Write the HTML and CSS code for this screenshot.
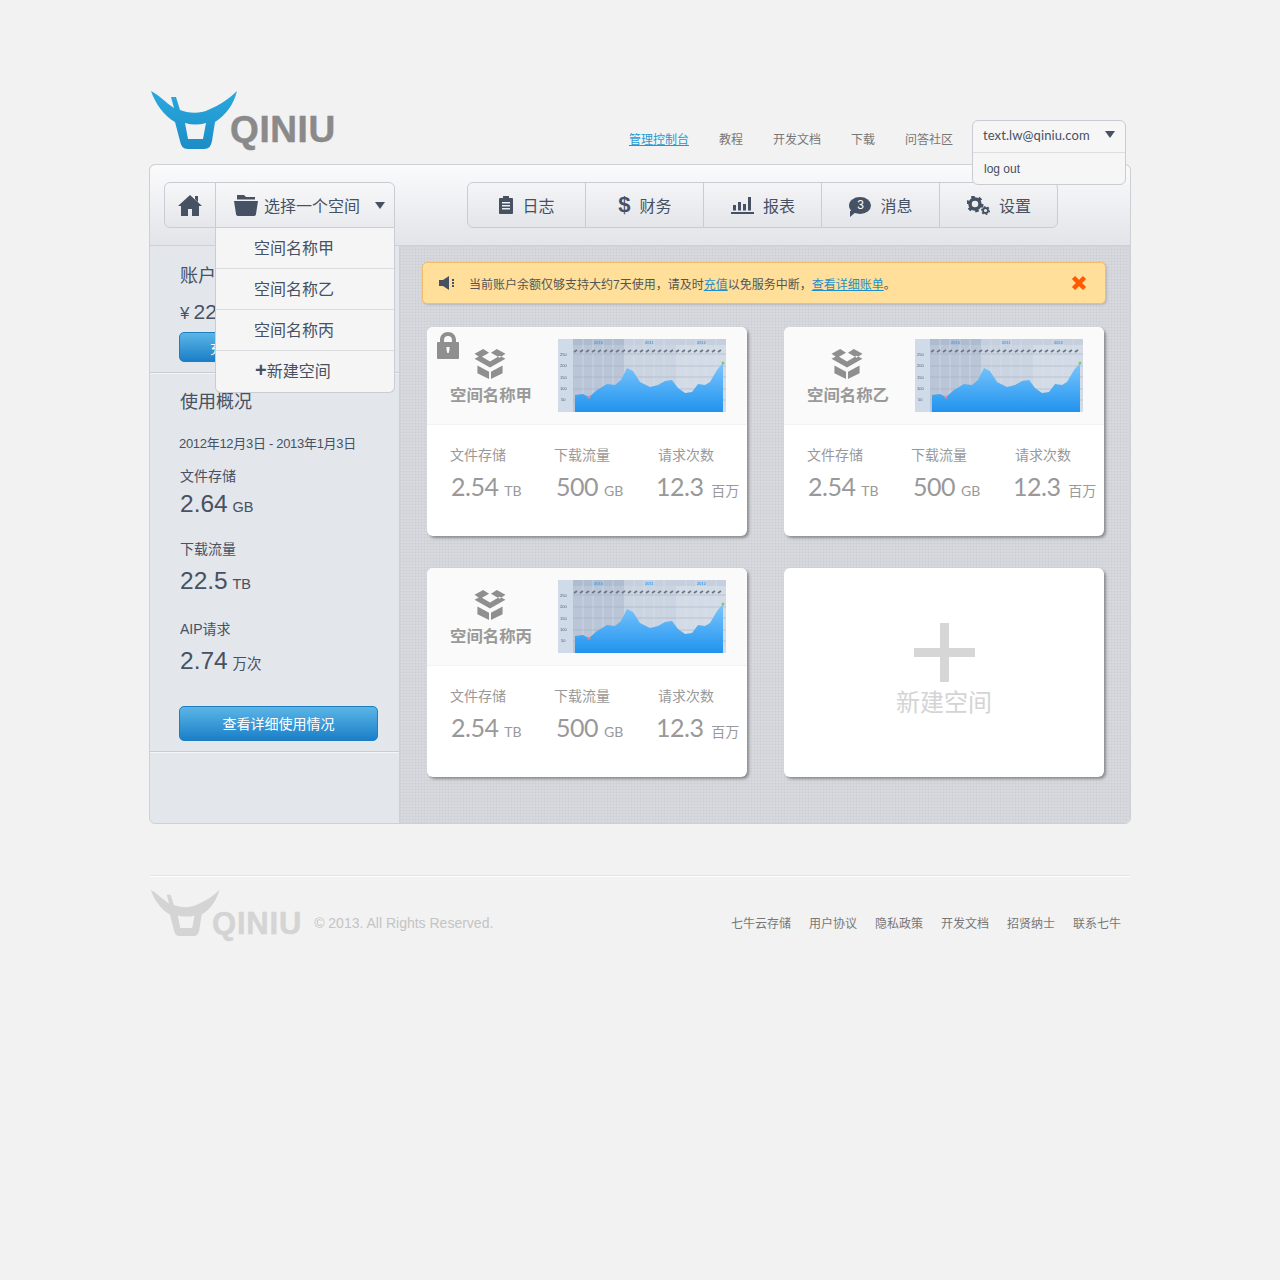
FILE: index.html
```html
<!DOCTYPE html>
<html lang="zh-CN">
<head>
    <meta charset="UTF-8">
    <meta name="viewport" content="width=device-width, initial-scale=1.0">
    <title>七牛云存储</title>
    <link rel="stylesheet" href="styles.css">
</head>
<body>
    <!-- shared drawings -->
    <svg class="defs" width="0" height="0">
        <defs>
            <linearGradient id="blueBull" x1="0" y1="0" x2="0" y2="1">
                <stop offset="0" stop-color="#2aa9df"/>
                <stop offset="1" stop-color="#1c8cc6"/>
            </linearGradient>
            <linearGradient id="chartFill" x1="0" y1="0" x2="0" y2="1">
                <stop offset="0" stop-color="#7cc6fd"/>
                <stop offset="1" stop-color="#2093ee"/>
            </linearGradient>
            <symbol id="bull" viewBox="0 0 88 60">
                <path fill-rule="evenodd" d="M1 1C9 5 15 12 24 18L21 7L26 7L30 20C37 23 50 24 58 20C70 15 80 8 87 1C84 14 76 25 65 32L62 51C61 56 59 59 54 59L38 59C33 59 31 56 30 51L25 32C14 26 5 13 1 1ZM35 33L38 49L53 49L56 33C49 35 42 35 35 33Z"/>
            </symbol>
            <symbol id="box" viewBox="0 0 32 31">
                <path d="M0 5L9 0L15 4L6 9ZM32 5L23 0L17 4L26 9ZM0 10L6 7L16 13L26 7L32 10L16 19ZM3 17L15 23.500L15 31L3 25ZM29 17L17 23.500L17 31L29 25Z"/>
            </symbol>
            <symbol id="chart" viewBox="0 0 168 73">
                <rect width="168" height="73" fill="#cfdbe9"/>
                <rect x="15" width="51" height="73" fill="#bac6d8"/>
                <rect x="66" width="52" height="73" fill="#cbd4e1"/>
                <rect x="118" width="50" height="73" fill="#d3dbe6"/>
                <rect x="15" width="51" height="6" fill="#aebcd0"/>
                <rect x="66" width="102" height="6" fill="#c5cfde"/>
                <path class="chart-stripes" d="M25 0V73M35 0V73M45 0V73M55 0V73M76 0V73M86 0V73M96 0V73M106 0V73M128 0V73M138 0V73M148 0V73M158 0V73"/>
                <path class="chart-grid" d="M15 15H168M15 27H168M15 38H168M15 50H168M15 61H168"/>
                <path class="chart-ticks" d="M16 13l3-2M22 13l3-2M28 13l3-2M34 13l3-2M40 13l3-2M46 13l3-2M52 13l3-2M58 13l3-2M64 13l3-2M70 13l3-2M76 13l3-2M82 13l3-2M88 13l3-2M94 13l3-2M100 13l3-2M106 13l3-2M112 13l3-2M118 13l3-2M124 13l3-2M130 13l3-2M136 13l3-2M142 13l3-2M148 13l3-2M154 13l3-2M160 13l3-2"/>
                <text class="chart-year" x="36" y="5">2010</text>
                <text class="chart-year" x="87" y="5">2011</text>
                <text class="chart-year" x="139" y="5">2012</text>
                <text class="chart-axis" x="2" y="17">250</text>
                <text class="chart-axis" x="2" y="28">200</text>
                <text class="chart-axis" x="2" y="40">150</text>
                <text class="chart-axis" x="2" y="51">100</text>
                <text class="chart-axis" x="3" y="62">50</text>
                <path fill="url(#chartFill)" d="M17 56L25 55L31 58L39 51L49 45L57 46L63 41L69 29L75 32L82 43L92 48L100 46L107 42L114 41L120 49L127 54L134 53L140 45L147 46L152 43L159 31L165 24V73H17Z"/>
                <circle cx="31" cy="58" r="1.500" fill="#e88a8a"/>
                <circle cx="165" cy="24" r="1.500" fill="#7cc96e"/>
            </symbol>
        </defs>
    </svg>

    <div class="page">
        <header class="top">
            <a class="logo">
                <svg class="logo-mark" width="88" height="60"><use href="#bull"/></svg>
                <span class="logo-text">QINIU</span>
            </a>
            <nav class="top-nav">
                <a class="active">管理控制台</a>
                <a>教程</a>
                <a>开发文档</a>
                <a>下载</a>
                <a>问答社区</a>
            </nav>
            <div class="user-menu">
                <div class="user-name">text.lw@qiniu.com <i class="caret"></i></div>
                <div class="user-logout">log out</div>
            </div>
        </header>

        <div class="panel">
            <div class="toolbar">
                <div class="home-btn">
                    <svg width="24" height="21" viewBox="0 0 24 21"><path fill="#465163" d="M12 0L24 11H21V21H14V14H10V21H3V11H0ZM17 1H20V7L17 4Z"/></svg>
                </div>
                <div class="space-select">
                    <div class="space-current">
                        <svg width="24" height="21" viewBox="0 0 24 21"><path fill="#465163" d="M3 3V0H10L12 2H21V4.500H3ZM0 6H24L22 19C22 20 21 21 20 21H4C3 21 2 20 2 19Z"/></svg>
                        <span>选择一个空间</span>
                        <i class="caret caret-big"></i>
                    </div>
                    <ul class="space-menu">
                        <li>空间名称甲</li>
                        <li>空间名称乙</li>
                        <li>空间名称丙</li>
                        <li><b>+</b>新建空间</li>
                    </ul>
                </div>
                <div class="tabs">
                    <a class="tab">
                        <svg width="14" height="18" viewBox="0 0 14 18"><path fill="#465163" d="M1 2H4V0H10V2H13C13.500 2 14 2.500 14 3V17C14 17.500 13.500 18 13 18H1C.5 18 0 17.500 0 17V3C0 2.500 .5 2 1 2ZM3 6V7.500H11V6ZM3 9V10.500H11V9ZM3 12V13.500H11V12Z"/></svg>
                        <span>日志</span>
                    </a>
                    <a class="tab">
                        <span class="dollar">$</span>
                        <span>财务</span>
                    </a>
                    <a class="tab">
                        <svg width="23" height="17" viewBox="0 0 23 17"><path fill="#465163" d="M0 15H23V17H0ZM2 8H5V13.500H2ZM7 5H10V13.500H7ZM12 7H15V13.500H12ZM17 0H20V13.500H17Z"/></svg>
                        <span>报表</span>
                    </a>
                    <a class="tab">
                        <span class="bubble">3</span>
                        <span>消息</span>
                    </a>
                    <a class="tab">
                        <svg width="23" height="19" viewBox="0 0 23 19">
                            <circle class="gear-ring" cx="8" cy="8" r="5"/>
                            <circle class="gear-teeth" cx="8" cy="8" r="7" pathLength="32"/>
                            <circle class="gear-ring-small" cx="18.500" cy="14.500" r="2.500"/>
                            <circle class="gear-teeth-small" cx="18.500" cy="14.500" r="3.800" pathLength="32"/>
                        </svg>
                        <span>设置</span>
                    </a>
                </div>
            </div>

            <div class="panel-body">
                <aside class="sidebar">
                    <section class="account">
                        <h3>账户余额</h3>
                        <div class="balance"><span class="yen">¥</span>22.50</div>
                        <a class="btn btn-short">充值</a>
                    </section>
                    <section class="usage">
                        <h3>使用概况</h3>
                        <div class="usage-date">2012年12月3日 - 2013年1月3日</div>
                        <div class="stat stat-first">
                            <div class="stat-label">文件存储</div>
                            <div class="stat-value">2.64 <small>GB</small></div>
                        </div>
                        <div class="stat">
                            <div class="stat-label">下载流量</div>
                            <div class="stat-value">22.5 <small>TB</small></div>
                        </div>
                        <div class="stat stat-last">
                            <div class="stat-label">AIP请求</div>
                            <div class="stat-value">2.74 <small>万次</small></div>
                        </div>
                        <a class="btn btn-wide">查看详细使用情况</a>
                    </section>
                </aside>

                <main class="content">
                    <div class="alert">
                        <svg class="alert-icon" width="16" height="16" viewBox="0 0 16 16"><path fill="#465163" d="M0 5H4L10 1V15L4 11H0ZM13 4H15V6H13ZM13 7H15V9H13ZM13 10H15V12H13Z"/></svg>
                        <span class="alert-text">当前账户余额仅够支持大约7天使用，请及时<a>充值</a>以免服务中断，<a>查看详细账单</a>。</span>
                        <svg class="alert-close" width="16" height="16" viewBox="0 0 16 16"><path d="M2.500 2.500L13.500 13.500M13.500 2.500L2.500 13.500"/></svg>
                    </div>

                    <div class="cards">
                        <div class="card">
                            <svg class="lock" width="22" height="27" viewBox="0 0 22 27"><path fill="#8f8f8f" d="M3 10V8C3 3 6.500 0 11 0S19 3 19 8V10H21C21.500 10 22 10.500 22 11V26C22 26.500 21.500 27 21 27H1C.5 27 0 26.500 0 26V11C0 10.500 .5 10 1 10ZM7 10H15V8C15 5.500 13.500 4 11 4S7 5.500 7 8ZM9.500 15V17.500L10.300 21H11.700L12.500 17.500V15Z" fill-rule="evenodd"/></svg>
                            <div class="card-top">
                                <div class="card-title">
                                    <svg class="box-icon"><use href="#box"/></svg>
                                    <span>空间名称甲</span>
                                </div>
                                <svg class="chart"><use href="#chart"/></svg>
                            </div>
                            <div class="card-stats">
                                <div class="card-stat"><label>文件存储</label><div class="num">2.54 <small>TB</small></div></div>
                                <div class="card-stat"><label>下载流量</label><div class="num">500 <small>GB</small></div></div>
                                <div class="card-stat"><label>请求次数</label><div class="num">12.3 <small class="cn">百万</small></div></div>
                            </div>
                        </div>

                        <div class="card">
                            <div class="card-top">
                                <div class="card-title">
                                    <svg class="box-icon"><use href="#box"/></svg>
                                    <span>空间名称乙</span>
                                </div>
                                <svg class="chart"><use href="#chart"/></svg>
                            </div>
                            <div class="card-stats">
                                <div class="card-stat"><label>文件存储</label><div class="num">2.54 <small>TB</small></div></div>
                                <div class="card-stat"><label>下载流量</label><div class="num">500 <small>GB</small></div></div>
                                <div class="card-stat"><label>请求次数</label><div class="num">12.3 <small class="cn">百万</small></div></div>
                            </div>
                        </div>

                        <div class="card">
                            <div class="card-top">
                                <div class="card-title">
                                    <svg class="box-icon"><use href="#box"/></svg>
                                    <span>空间名称丙</span>
                                </div>
                                <svg class="chart"><use href="#chart"/></svg>
                            </div>
                            <div class="card-stats">
                                <div class="card-stat"><label>文件存储</label><div class="num">2.54 <small>TB</small></div></div>
                                <div class="card-stat"><label>下载流量</label><div class="num">500 <small>GB</small></div></div>
                                <div class="card-stat"><label>请求次数</label><div class="num">12.3 <small class="cn">百万</small></div></div>
                            </div>
                        </div>

                        <div class="card card-new">
                            <i class="plus"></i>
                            <span>新建空间</span>
                        </div>
                    </div>
                </main>
            </div>
        </div>

        <footer class="footer">
            <a class="logo logo-small">
                <svg class="logo-mark" width="70" height="48"><use href="#bull"/></svg>
                <span class="logo-text">QINIU</span>
            </a>
            <span class="copyright">© 2013. All Rights Reserved.</span>
            <nav class="footer-nav">
                <a>七牛云存储</a>
                <a>用户协议</a>
                <a>隐私政策</a>
                <a>开发文档</a>
                <a>招贤纳士</a>
                <a>联系七牛</a>
            </nav>
        </footer>
    </div>
</body>
</html>
```

FILE: styles.css
```css
* {
    box-sizing: border-box;
}
body {
    margin: 0;
    min-height: 1280px;
    font-family: "Liberation Sans", "Noto Sans CJK SC", sans-serif;
    color: #465163;
    background-color: #f2f2f2;
}
a {
    cursor: pointer;
}
h3 {
    margin: 0;
    font-size: 18px;
    font-weight: normal;
    line-height: 24px;
}
small {
    font-size: inherit;
}
.defs {
    position: absolute;
}
.page {
    width: 980px;
    margin: 0 auto;
    padding-top: 90px;
}

/* header */
.top {
    position: relative;
    display: flex;
    height: 74px;
}
.logo {
    display: flex;
    align-items: flex-start;
    fill: url(#blueBull);
}
.logo-text {
    margin: 19px 0 0 -8px;
    font-size: 37px;
    font-weight: bold;
    line-height: 42px;
    letter-spacing: 0.600px;
    color: #8a8a8a;
    -webkit-text-stroke: 0.5px #8a8a8a;
}
.top-nav {
    display: flex;
    gap: 30px;
    margin: 42px 177px 0 auto;
    font-size: 12px;
    line-height: 16px;
    color: #777;
}
.top-nav .active {
    color: #1f9ad6;
    text-decoration: underline;
}
.user-menu {
    position: absolute;
    top: 30px;
    left: 822px;
    z-index: 5;
    width: 154px;
    height: 65px;
    border: 1px solid #c9ccd2;
    border-radius: 6px;
    background: #f6f6f7;
    font-size: 12px;
}
.user-name {
    display: flex;
    align-items: center;
    justify-content: space-between;
    height: 32px;
    padding: 0 10px 4px;
    border-bottom: 1px solid #dcdee2;
    font-family: Lato, "Liberation Sans", sans-serif;
    font-size: 13px;
    letter-spacing: 0.100px;
}
.user-logout {
    padding: 8px 11px;
    line-height: 16px;
}
.caret {
    width: 0;
    height: 0;
    border-top: 7px solid #465163;
    border-left: 5px solid transparent;
    border-right: 5px solid transparent;
}

/* panel */
.panel {
    width: 982px;
    margin-left: -1px;
    border: 1px solid #cdd0d5;
    border-radius: 6px;
    background: #e3e6eb;
}
.toolbar {
    display: flex;
    height: 81px;
    padding: 17px 14px 0;
    border-bottom: 1px solid #cdd0d5;
    border-radius: 6px 6px 0 0;
    background: linear-gradient(#fbfbfc, #e2e4e9);
}
.home-btn {
    display: flex;
    align-items: center;
    justify-content: center;
    width: 52px;
    height: 46px;
    border: 1px solid #c9ccd2;
    border-radius: 6px 0 0 6px;
    background: linear-gradient(#f7f7f8, #e4e6ea);
}
.space-select {
    position: relative;
    z-index: 4;
    width: 180px;
    height: 46px;
    margin-left: -1px;
}
.space-current {
    display: flex;
    align-items: center;
    height: 46px;
    padding-left: 18px;
    border: 1px solid #c9ccd2;
    border-radius: 0 6px 0 0;
    background: linear-gradient(#f7f7f8, #e9ebee);
    font-size: 16px;
}
.space-current span {
    margin-left: 6px;
}
.caret-big {
    margin-left: 15px;
}
.space-menu {
    width: 180px;
    margin: 0;
    padding: 0;
    list-style: none;
    border: 1px solid #c9ccd2;
    border-top: 0;
    border-radius: 0 0 6px 6px;
    background: #f5f5f6;
    font-size: 16px;
}
.space-menu li {
    height: 41px;
    padding: 1px 0 0 38px;
    line-height: 39px;
    border-bottom: 1px solid #d9dbdf;
}
.space-menu li:last-child {
    border-bottom: 0;
}
.space-menu b {
    font-size: 20px;
    line-height: 0;
    margin: 0 0 0 1px;
}
.tabs {
    display: flex;
    height: 46px;
    margin-left: 72px;
    border: 1px solid #c9ccd2;
    border-radius: 6px;
    background: linear-gradient(#f5f5f7, #e3e5e9);
}
.tab {
    display: flex;
    align-items: center;
    justify-content: center;
    gap: 9px;
    width: 118px;
    padding-left: 1px;
    font-size: 16px;
    border-right: 1px solid #c9ccd2;
}
.tab:last-child {
    width: 117px;
    border-right: 0;
}
.dollar {
    font-size: 22px;
    font-weight: bold;
}
.bubble {
    position: relative;
    width: 22px;
    height: 17px;
    border-radius: 50%;
    background: #465163;
    color: #fff;
    font-size: 12px;
    line-height: 17px;
    text-align: center;
}
.bubble::after {
    content: "";
    position: absolute;
    left: 1px;
    bottom: -3px;
    border-top: 6px solid #465163;
    border-right: 7px solid transparent;
}
.gear-ring, .gear-ring-small {
    fill: none;
    stroke: #465163;
}
.gear-ring {
    stroke-width: 3.500;
}
.gear-ring-small {
    stroke-width: 1.800;
}
.gear-teeth, .gear-teeth-small {
    fill: none;
    stroke: #465163;
    stroke-dasharray: 2.500 2.833;
}
.gear-teeth {
    stroke-width: 3;
}
.gear-teeth-small {
    stroke-width: 1.500;
}
.panel-body {
    display: flex;
    height: 577px;
    border-radius: 0 0 6px 6px;
    overflow: hidden;
}

/* sidebar */
.sidebar {
    width: 250px;
    flex: none;
    border-right: 1px solid #cdd0d5;
}
.account {
    height: 127px;
    padding: 8px 30px 0;
    border-bottom: 1px solid #c9ccd2;
    box-shadow: 0 1px 0 #f4f5f7;
}
.account h3 {
    margin-top: 10px;
}
.balance {
    margin-top: 11px;
    font-size: 21px;
    line-height: 26px;
}
.yen {
    margin-right: 4px;
    font-size: 17px;
}
.btn {
    display: block;
    color: #fff;
    font-size: 14px;
    text-align: center;
    border: 1px solid #1d7fc0;
    border-radius: 5px;
    background: linear-gradient(#5bb5e6, #1b7fc8);
}
.btn-short {
    width: 90px;
    height: 30px;
    margin: 5px 0 0 -1px;
    line-height: 30px;
}
.usage {
    height: 379px;
    padding: 17px 30px 0;
    border-bottom: 1px solid #c9ccd2;
    box-shadow: 0 1px 0 #f4f5f7;
}
.usage-date {
    margin: 22px 0 0 -1px;
    font-size: 13px;
    line-height: 16px;
    letter-spacing: -0.300px;
}
.stat {
    margin-top: 18px;
}
.stat-first {
    margin-top: 15px;
}
.stat-last {
    margin-top: 21px;
}
.stat-label {
    font-size: 14px;
    line-height: 18px;
}
.stat-value {
    margin-top: 8px;
    font-size: 24.500px;
    line-height: 30px;
}
.stat-first .stat-value {
    margin-top: 4px;
}
.stat-value small {
    margin-left: -2px;
    font-size: 14.500px;
}
.btn-wide {
    width: 199px;
    height: 35px;
    margin: 27px 0 0 -1px;
    line-height: 34px;
}

/* main area */
.content {
    flex: 1;
    padding: 16px 0 0 22px;
    background-color: #d7d9de;
    background-image:
        linear-gradient(rgba(0, 0, 0, 0.025) 50%, transparent 50%),
        linear-gradient(90deg, rgba(0, 0, 0, 0.025) 50%, transparent 50%);
    background-size: 3px 3px;
}
.alert {
    display: flex;
    align-items: center;
    width: 684px;
    height: 42px;
    padding: 0 18px 0 16px;
    border: 1px solid #f5bd6a;
    border-radius: 5px;
    background: #ffdf99;
    box-shadow: 1px 1px 2px rgba(0, 0, 0, 0.15);
}
.alert-text {
    margin-left: 14px;
    font-size: 12px;
    color: #555;
}
.alert-text a {
    color: #1f8fc9;
    text-decoration: underline;
}
.alert-close {
    margin-left: auto;
    fill: none;
    stroke: #ff5a00;
    stroke-width: 4.500;
}
.cards {
    display: grid;
    grid-template-columns: 320px 320px;
    grid-auto-rows: 209px;
    gap: 32px 37px;
    margin: 23px 0 0 5px;
}
.card {
    position: relative;
    border-radius: 6px;
    background: #fff;
    box-shadow: 2px 2px 3px rgba(0, 0, 0, 0.35);
    color: #999;
}
.lock {
    position: absolute;
    top: 5px;
    left: 10px;
}
.card-top {
    display: flex;
    height: 98px;
    border-bottom: 1px solid #f3f3f4;
    border-radius: 6px 6px 0 0;
    background: #fafafa;
}
.card-title {
    width: 131px;
    flex: none;
    padding: 22px 0 0 23px;
    font-size: 16.400px;
    font-weight: bold;
    line-height: 24px;
    color: #999;
}
.box-icon {
    display: block;
    width: 32px;
    height: 30px;
    margin: 0 0 4px 24px;
    fill: #8f8f8f;
}
.chart {
    width: 168px;
    height: 73px;
    margin-top: 12px;
    filter: blur(0.5px);
}
.chart-stripes {
    stroke: #dde4ec;
    stroke-width: 1;
    opacity: 0.5;
}
.chart-grid {
    stroke: #9fabbc;
    stroke-width: 0.500;
}
.chart-ticks {
    stroke: #6c7686;
    stroke-width: 1.800;
}
.chart-year {
    fill: #4aa3e8;
    font-size: 4px;
    font-weight: bold;
}
.chart-axis {
    fill: #556070;
    font-size: 4px;
}
.card-stats {
    display: grid;
    grid-template-columns: 104px 104px 90px;
    padding: 20px 0 0 23px;
}
.card-stat label {
    display: block;
    font-size: 14px;
    line-height: 20px;
}
.num {
    margin: 7px 0 0 1px;
    font-family: Lato, "Liberation Sans", sans-serif;
    font-size: 25px;
    line-height: 28px;
    letter-spacing: -0.500px;
    white-space: nowrap;
}
.card-stat:nth-child(2) .num {
    margin-left: 2px;
}
.card-stat:nth-child(3) .num {
    margin-left: -2px;
}
.num small {
    font-size: 14px;
    letter-spacing: 0;
}
.num .cn {
    margin-left: 2px;
    font-family: "Noto Sans CJK SC", sans-serif;
    font-size: 14px;
}
.card-new {
    display: flex;
    flex-direction: column;
    align-items: center;
    padding-top: 55px;
    color: #d4d4d4;
    font-size: 24px;
    line-height: 34px;
}
.plus {
    position: relative;
    display: block;
    width: 61px;
    height: 59px;
    margin-bottom: 4px;
    background:
        linear-gradient(#d6d6d6, #d6d6d6) center / 100% 9px no-repeat,
        linear-gradient(#d6d6d6, #d6d6d6) center / 9px 100% no-repeat;
}

/* footer */
.footer {
    display: flex;
    align-items: flex-start;
    margin-top: 51px;
    padding-top: 13px;
    border-top: 1px solid #e3e3e3;
    box-shadow: inset 0 1px 0 #fff;
}
.logo-small {
    fill: #d4d4d4;
}
.logo-small .logo-text {
    margin: 16px 0 0 -8px;
    font-size: 31px;
    line-height: 38px;
    letter-spacing: 0.800px;
    color: #d4d4d4;
    -webkit-text-stroke: 0.5px #d4d4d4;
}
.copyright {
    margin: 25px 0 0 12px;
    font-size: 14px;
    line-height: 18px;
    color: #c4c4c4;
}
.footer-nav {
    display: flex;
    gap: 18px;
    margin: 27px 9px 0 auto;
    font-size: 12px;
    line-height: 16px;
    color: #777;
}
```
